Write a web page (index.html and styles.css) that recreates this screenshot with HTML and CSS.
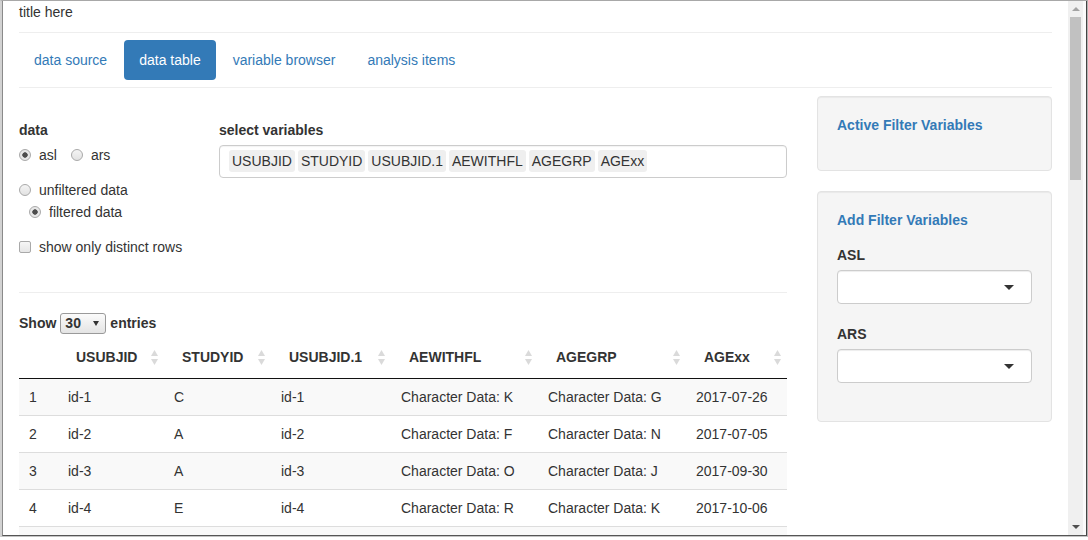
FILE: index.html
```html
<!DOCTYPE html>
<html lang="en">
<head>
<meta charset="utf-8">
<title>title here</title>
<link rel="stylesheet" href="styles.css">
</head>
<body>
<div class="window">
  <div class="frame">
    <div class="viewport">
      <div class="page">
        <div class="title">title here</div>
        <hr class="rule rule-title">
        <ul class="pills">
          <li><a>data source</a></li>
          <li class="active"><a>data table</a></li>
          <li><a>variable browser</a></li>
          <li><a>analysis items</a></li>
        </ul>
        <hr class="rule rule-nav">
        <div class="main">
          <div class="left">
            <div class="controls">
              <div class="data-col">
                <div class="form-group">
                  <label class="control-label">data</label>
                  <div class="inline-opts">
                    <label class="opt"><span class="radio checked"></span>asl</label>
                    <label class="opt"><span class="radio"></span>ars</label>
                  </div>
                </div>
                <div class="form-group">
                  <label class="opt opt-first"><span class="radio"></span>unfiltered data</label>
                  <label class="opt indent"><span class="radio checked"></span>filtered data</label>
                </div>
                <div class="form-group">
                  <label class="opt"><span class="checkbox"></span>show only distinct rows</label>
                </div>
              </div>
              <div class="vars-col">
                <label class="control-label">select variables</label>
                <div class="tagbox">
                  <span class="tag">USUBJID</span>
                  <span class="tag">STUDYID</span>
                  <span class="tag">USUBJID.1</span>
                  <span class="tag">AEWITHFL</span>
                  <span class="tag">AGEGRP</span>
                  <span class="tag">AGExx</span>
                </div>
              </div>
            </div>
            <hr class="rule rule-section">
            <div class="length">
              <span>Show</span>
              <span class="len-select"><span>30</span><span class="len-arrow"></span></span>
              <span>entries</span>
            </div>
            <table class="dt">
              <colgroup>
                <col class="c0"><col class="c1"><col class="c2"><col class="c3"><col class="c4"><col class="c5"><col class="c6">
              </colgroup>
              <thead>
                <tr>
                  <th></th>
                  <th><div class="th-inner"><span>USUBJID</span><svg class="sort" viewBox="0 0 7 15" width="7" height="15"><polygon points="0,6 3.5,0 7,6"/><polygon points="0,9 7,9 3.5,15"/></svg></div></th>
                  <th><div class="th-inner"><span>STUDYID</span><svg class="sort" viewBox="0 0 7 15" width="7" height="15"><polygon points="0,6 3.5,0 7,6"/><polygon points="0,9 7,9 3.5,15"/></svg></div></th>
                  <th><div class="th-inner"><span>USUBJID.1</span><svg class="sort" viewBox="0 0 7 15" width="7" height="15"><polygon points="0,6 3.5,0 7,6"/><polygon points="0,9 7,9 3.5,15"/></svg></div></th>
                  <th><div class="th-inner"><span>AEWITHFL</span><svg class="sort" viewBox="0 0 7 15" width="7" height="15"><polygon points="0,6 3.5,0 7,6"/><polygon points="0,9 7,9 3.5,15"/></svg></div></th>
                  <th><div class="th-inner"><span>AGEGRP</span><svg class="sort" viewBox="0 0 7 15" width="7" height="15"><polygon points="0,6 3.5,0 7,6"/><polygon points="0,9 7,9 3.5,15"/></svg></div></th>
                  <th><div class="th-inner"><span>AGExx</span><svg class="sort" viewBox="0 0 7 15" width="7" height="15"><polygon points="0,6 3.5,0 7,6"/><polygon points="0,9 7,9 3.5,15"/></svg></div></th>
                </tr>
              </thead>
              <tbody>
                <tr class="odd"><td>1</td><td>id-1</td><td>C</td><td>id-1</td><td>Character Data: K</td><td>Character Data: G</td><td>2017-07-26</td></tr>
                <tr class="even"><td>2</td><td>id-2</td><td>A</td><td>id-2</td><td>Character Data: F</td><td>Character Data: N</td><td>2017-07-05</td></tr>
                <tr class="odd"><td>3</td><td>id-3</td><td>A</td><td>id-3</td><td>Character Data: O</td><td>Character Data: J</td><td>2017-09-30</td></tr>
                <tr class="even"><td>4</td><td>id-4</td><td>E</td><td>id-4</td><td>Character Data: R</td><td>Character Data: K</td><td>2017-10-06</td></tr>
                <tr class="odd row-clipped"><td></td><td></td><td></td><td></td><td></td><td></td><td></td></tr>
              </tbody>
            </table>
          </div>
          <aside class="side">
            <div class="well well-active">
              <div class="well-title">Active Filter Variables</div>
            </div>
            <div class="well well-add">
              <div class="well-title">Add Filter Variables</div>
              <div class="side-group">
                <label class="control-label">ASL</label>
                <div class="select"><span class="caret"></span></div>
              </div>
              <div class="side-group">
                <label class="control-label">ARS</label>
                <div class="select"><span class="caret"></span></div>
              </div>
            </div>
          </aside>
        </div>
      </div>
    </div>
    <div class="scrollbar">
      <div class="sb-btn"><span class="sb-up"></span></div>
      <div class="sb-thumb"></div>
      <div class="sb-space"></div>
      <div class="sb-btn"><span class="sb-down"></span></div>
    </div>
  </div>
</div>
</body>
</html>
```
FILE: styles.css
```css
* { box-sizing: border-box; }

html, body {
  margin: 0;
  padding: 0;
  background: #fff;
}

body {
  font-family: "Liberation Sans", Arial, sans-serif;
  font-size: 14px;
  line-height: 20px;
  color: #333;
}

.window {
  width: 1088px;
  height: 537px;
  border-top: 1px solid #a8a8a8;
  border-left: 2px solid #d2d2d2;
  border-right: 1px solid #b4b4b4;
  border-bottom: 1px solid #c4c4c4;
  overflow: hidden;
}

.frame {
  height: 100%;
  display: flex;
  border-left: 1px solid #8a8a8a;
  border-right: 1px solid #444;
  border-bottom: 1px solid #555;
  padding-right: 3px;
  background: #fbfbfb;
}

.viewport {
  width: 1065px;
  height: 100%;
  overflow: hidden;
  background: #fff;
}

.page {
  padding: 0 16px;
}

.title {
  margin-top: 1px;
  height: 20px;
}

.rule {
  border: 0;
  border-top: 1px solid #eee;
  height: 0;
  margin: 0;
}

.rule-title { margin-top: 10px; }
.rule-nav { margin-top: 7px; }
.rule-section { margin: 20px 0; }

.pills {
  list-style: none;
  margin: 7px 0 0;
  padding: 0;
  display: flex;
  gap: 2px;
}

.pills a {
  display: block;
  padding: 10px 15px;
  border-radius: 4px;
  color: #337ab7;
}

.pills .active a {
  background: #337ab7;
  color: #fff;
}

.main {
  display: flex;
  gap: 30px;
  margin-top: 8px;
}

.left {
  width: 768px;
  padding-top: 24px;
}

.controls {
  display: flex;
}

.data-col {
  width: 200px;
}

.vars-col {
  flex: 1;
}

.form-group {
  margin-bottom: 15px;
}

.control-label {
  display: block;
  font-weight: bold;
  margin-bottom: 5px;
}

.inline-opts {
  display: flex;
  gap: 14px;
}

.opt {
  display: flex;
  align-items: center;
  gap: 8px;
  font-weight: normal;
}

.opt-first {
  margin-top: 1px;
}

.opt.indent {
  margin-top: 2px;
  padding-left: 10px;
}

.radio {
  width: 12px;
  height: 12px;
  border-radius: 50%;
  border: 1px solid #a9a9a9;
  background: linear-gradient(#f4f4f4, #e2e2e2);
}

.radio.checked {
  background: radial-gradient(circle, #4d4d4d 0, #4d4d4d 2.4px, #e6e6e6 3px, #ececec 100%);
}

.checkbox {
  width: 12px;
  height: 12px;
  border-radius: 2px;
  border: 1px solid #a9a9a9;
  background: linear-gradient(#f6f6f6, #e6e6e6);
}

.tagbox {
  display: flex;
  gap: 3px;
  border: 1px solid #ccc;
  border-radius: 4px;
  padding: 4px 9px 5px;
  box-shadow: inset 0 1px 1px rgba(0, 0, 0, 0.05);
}

.tag {
  background: #efefef;
  border-radius: 3px;
  padding: 0 3px;
  line-height: 22px;
  color: #333;
}

.length {
  display: flex;
  align-items: center;
  gap: 4px;
  font-weight: bold;
  height: 20px;
}

.len-select {
  width: 46px;
  height: 21px;
  border: 1px solid #9a9a9a;
  border-radius: 3px;
  background: linear-gradient(#fbfbfb, #e4e4e4);
  display: flex;
  align-items: center;
  justify-content: space-between;
  padding: 0 6px 0 4px;
  font-size: 14px;
}

.len-arrow {
  width: 0;
  height: 0;
  border-left: 3.5px solid transparent;
  border-right: 3.5px solid transparent;
  border-top: 5px solid #333;
}

.dt {
  margin-top: 4px;
  width: 768px;
  table-layout: fixed;
  border-collapse: separate;
  border-spacing: 0;
}

.c0 { width: 39px; }
.c1 { width: 106px; }
.c2 { width: 107px; }
.c3 { width: 120px; }
.c4 { width: 147px; }
.c5 { width: 148px; }
.c6 { width: 101px; }

.dt th {
  text-align: left;
  font-weight: bold;
  padding: 10px 6px 11px 18px;
  border-bottom: 1px solid #111;
}

.th-inner {
  display: flex;
  align-items: center;
  justify-content: space-between;
}

.sort {
  fill: #dadada;
  display: block;
}

.dt td {
  padding: 8px 10px;
  height: 36px;
  white-space: nowrap;
  overflow: hidden;
}

.dt tr + tr td {
  border-top: 1px solid #ddd;
  height: 37px;
}

.dt tr.odd td {
  background: #f9f9f9;
}

.side {
  width: 235px;
}

.well {
  background: #f5f5f5;
  border: 1px solid #e3e3e3;
  border-radius: 4px;
  padding: 18px 19px 20px;
  box-shadow: inset 0 1px 1px rgba(0, 0, 0, 0.05);
}

.well-title {
  font-weight: bold;
  color: #337ab7;
  margin-bottom: 15px;
}

.well-add {
  margin-top: 20px;
  padding-bottom: 18px;
}

.side-group {
  margin-bottom: 20px;
}

.select {
  height: 34px;
  background: #fff;
  border: 1px solid #ccc;
  border-radius: 4px;
  box-shadow: inset 0 1px 1px rgba(0, 0, 0, 0.075);
  display: flex;
  align-items: center;
  justify-content: flex-end;
  padding-right: 17px;
}

.caret {
  width: 0;
  height: 0;
  border-left: 5px solid transparent;
  border-right: 5px solid transparent;
  border-top: 5px solid #333;
}

.scrollbar {
  width: 15px;
  height: 100%;
  background: #f0f0f0;
  display: flex;
  flex-direction: column;
  align-items: center;
}

.sb-btn {
  height: 16px;
  width: 15px;
  display: flex;
  align-items: center;
  justify-content: center;
}

.sb-up {
  width: 0;
  height: 0;
  border-left: 4px solid transparent;
  border-right: 4px solid transparent;
  border-bottom: 4px solid #a3a3a3;
}

.sb-down {
  width: 0;
  height: 0;
  border-left: 4px solid transparent;
  border-right: 4px solid transparent;
  border-top: 4px solid #505050;
}

.sb-thumb {
  width: 11px;
  height: 163px;
  background: #c1c1c1;
}

.sb-space {
  flex: 1;
}
```
